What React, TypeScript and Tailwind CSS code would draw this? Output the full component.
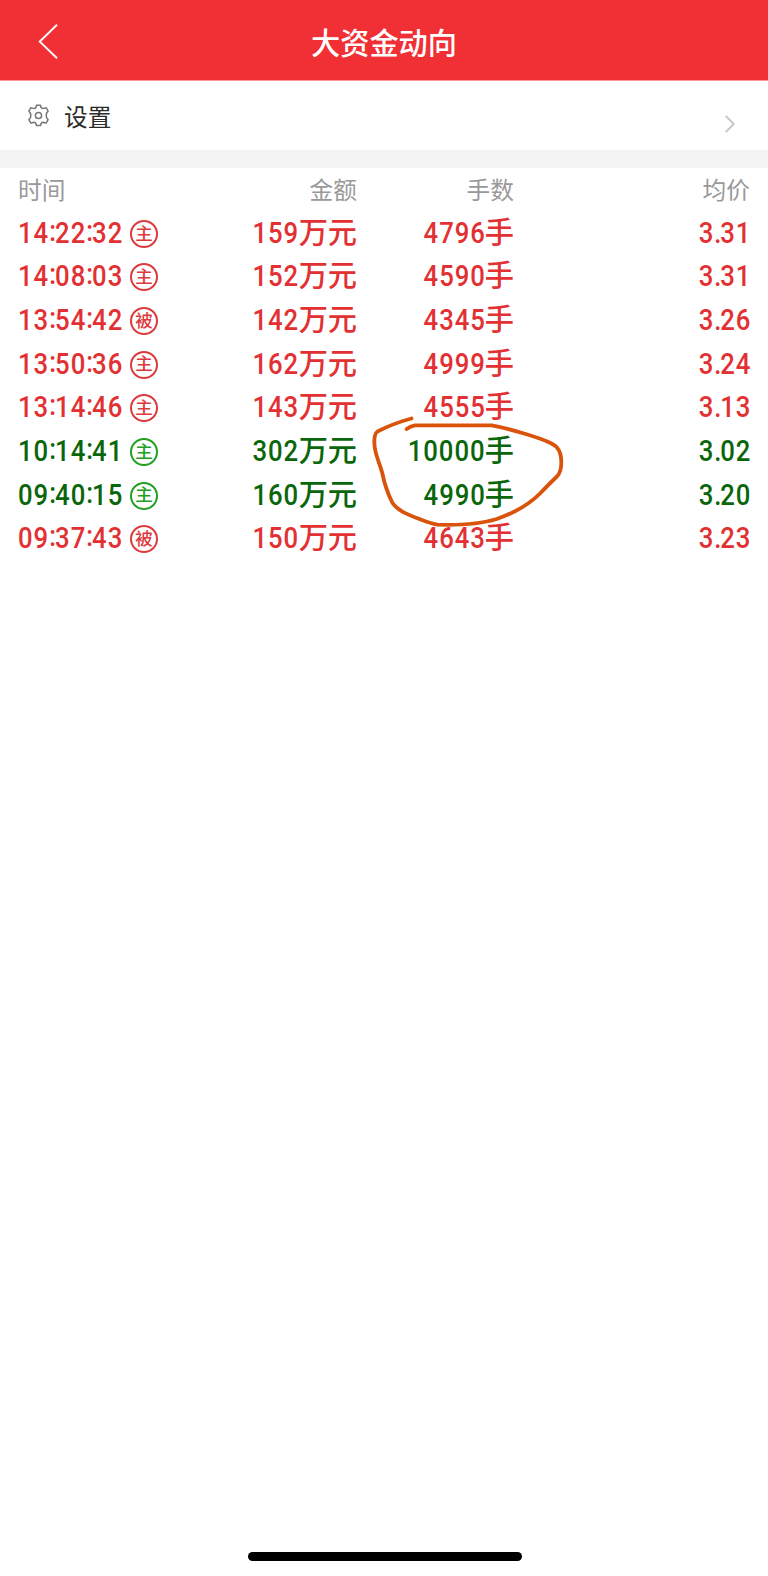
type Tone = "buy" | "sell";

interface Trade {
  time: string;
  kind: "主" | "被";
  amount: number;
  lots: number;
  price: string;
  tone: Tone;
}

const TRADES: Trade[] = [
  { time: "14:22:32", kind: "主", amount: 159, lots: 4796, price: "3.31", tone: "buy" },
  { time: "14:08:03", kind: "主", amount: 152, lots: 4590, price: "3.31", tone: "buy" },
  { time: "13:54:42", kind: "被", amount: 142, lots: 4345, price: "3.26", tone: "buy" },
  { time: "13:50:36", kind: "主", amount: 162, lots: 4999, price: "3.24", tone: "buy" },
  { time: "13:14:46", kind: "主", amount: 143, lots: 4555, price: "3.13", tone: "buy" },
  { time: "10:14:41", kind: "主", amount: 302, lots: 10000, price: "3.02", tone: "sell" },
  { time: "09:40:15", kind: "主", amount: 160, lots: 4990, price: "3.20", tone: "sell" },
  { time: "09:37:43", kind: "被", amount: 150, lots: 4643, price: "3.23", tone: "buy" },
];

const TEXT_COLOR: Record<Tone, string> = {
  buy: "text-[#e23033]",
  sell: "text-[#0a660a]",
};

const BADGE_COLOR: Record<Tone, string> = {
  buy: "border-[#dc3a3d] text-[#dc3a3d]",
  sell: "border-[#22a022] text-[#22a022]",
};

const COLUMNS = "grid grid-cols-[180px_159px_157px_236px] items-center pl-[18px]";

// Condensed digits: narrower glyphs, slightly opened spacing
const DIGITS = "inline-block scale-x-[0.88] tracking-[1.15px]";

function Header() {
  return (
    <header className="relative flex h-[81px] items-center justify-center border-b border-[#f8989b] bg-[#f13035] pt-[9px]">
      <button type="button" aria-label="返回" className="absolute left-9 top-[22px]">
        <svg width="24" height="40" viewBox="0 0 24 40" fill="none" stroke="white" strokeWidth="1.9">
          <path d="M21 2.8 L3.8 19.6 L21 36.2" />
        </svg>
      </button>
      <h1 className="text-[29.2px] leading-none font-medium text-white">大资金动向</h1>
    </header>
  );
}

function Settings() {
  return (
    <div className="flex h-[69px] items-center pr-[32px] pl-[27px]">
      <svg width="23" height="23" viewBox="0 0 23 23" fill="none" stroke="#777" strokeWidth="1.5">
        <path
          strokeLinejoin="round"
          d="M9.5 1.3h4c.1 2 1 3.200 2.600 3.300 1-.1 2-.7 3-.9l2 3.400c-1.700 1.400-2 2.400-1.900 4.400-.1 1.900.2 2.800 1.900 4.200l-2 3.400c-1-.2-2-.8-3-.9-1.600.1-2.500 1.300-2.600 3.400h-4c-.1-2.100-1-3.300-2.600-3.400-1 .1-2 .7-3 .9l-2-3.400c1.700-1.400 2-2.300 1.900-4.200.1-2-.2-3-1.900-4.400l2-3.400c1 .2 2 .8 3 .9 1.600-.1 2.500-1.300 2.600-3.300z"
        />
        <circle cx="11.5" cy="11.5" r="3.1" />
      </svg>
      <span className="mt-[6px] ml-[14px] text-[23.7px] leading-none text-[#2b2b2b]">设置</span>
      <svg className="mt-[17px] ml-auto" width="12" height="20" viewBox="0 0 12 20" fill="none" stroke="#c8c8c8" strokeWidth="2">
        <path d="M1.8 2 L9.7 10 L1.8 18" />
      </svg>
    </div>
  );
}

function Time({ value }: { value: string }) {
  const [hours, minutes, seconds] = value.split(":");
  const colon = <span className="relative -top-[2px] tracking-[-1.1px]">:</span>;
  return (
    <span className={`${DIGITS} origin-left`}>
      {hours}
      {colon}
      {minutes}
      {colon}
      {seconds}
    </span>
  );
}

function Price({ value }: { value: string }) {
  const [whole, decimals] = value.split(".");
  return (
    <span className={`${DIGITS} origin-right translate-x-[1.5px]`}>
      {whole}
      <span className="tracking-[-1.4px]">.</span>
      {decimals}
    </span>
  );
}

function TradeRow({ trade }: { trade: Trade }) {
  return (
    <div
      className={`${COLUMNS} h-[43.65px] pt-px text-[29.2px] leading-none font-medium whitespace-nowrap ${TEXT_COLOR[trade.tone]}`}
    >
      <div className="flex items-center">
        <div className="w-[112px]">
          <Time value={trade.time} />
        </div>
        <span
          className={`mt-px flex size-7 items-center justify-center rounded-full border-2 pt-px text-[17.5px] leading-none font-medium ${BADGE_COLOR[trade.tone]}`}
        >
          {trade.kind}
        </span>
      </div>
      <div className="text-right">
        <span className={`${DIGITS} origin-right translate-x-px`}>{trade.amount}</span>
        万元
      </div>
      <div className="text-right">
        <span className={`${DIGITS} origin-right translate-x-px`}>{trade.lots}</span>
        手
      </div>
      <div className="text-right">
        <Price value={trade.price} />
      </div>
    </div>
  );
}

/** Hand-drawn marker loop over the large green orders. */
function MarkerLoop() {
  return (
    <svg
      className="pointer-events-none absolute top-[410px] left-[366px]"
      width="204"
      height="124"
      viewBox="366 410 204 124"
      fill="none"
      stroke="#d9540a"
      strokeWidth="3.8"
      strokeLinecap="round"
      strokeLinejoin="round"
    >
      <path d="M411.5 418.5 C402 421 389 425.5 377.5 431.5 C373.5 434 374 444 375.2 450 C377 459 381 467 382.5 474 C384.5 484 388 494 392.5 503 C398 511 408 514.5 420 519.3 Q431 523.5 437.3 524.7 C456 525.2 478 525 496.7 519 C514 513 529 504.5 540 493.5 Q551 482 557 476.5 C562 471 561.5 461 560.8 456 C559 447.5 555 445 550 442.7 C539 437.5 509 428.5 491.7 425.4 L415 425.4 Q410 426.5 406.7 429" />
    </svg>
  );
}

export default function App() {
  return (
    <main className="relative flex h-[1576px] w-[768px] flex-col bg-white font-[Roboto,'Noto_Sans_CJK_SC',sans-serif]">
      <Header />
      <Settings />
      <div className="h-[17.5px] bg-[#f4f4f4]" />
      <section>
        <div className={`${COLUMNS} h-[43.5px] pt-[6px] text-[23.7px] leading-none text-[#999]`}>
          <span>时间</span>
          <span className="text-right">金额</span>
          <span className="text-right">手数</span>
          <span className="text-right">均价</span>
        </div>
        {TRADES.map((trade) => (
          <TradeRow key={trade.time} trade={trade} />
        ))}
      </section>
      <div className="mt-auto mb-[15px] ml-[247.5px] h-[9px] w-[274px] rounded-full bg-black" />
      <MarkerLoop />
    </main>
  );
}
